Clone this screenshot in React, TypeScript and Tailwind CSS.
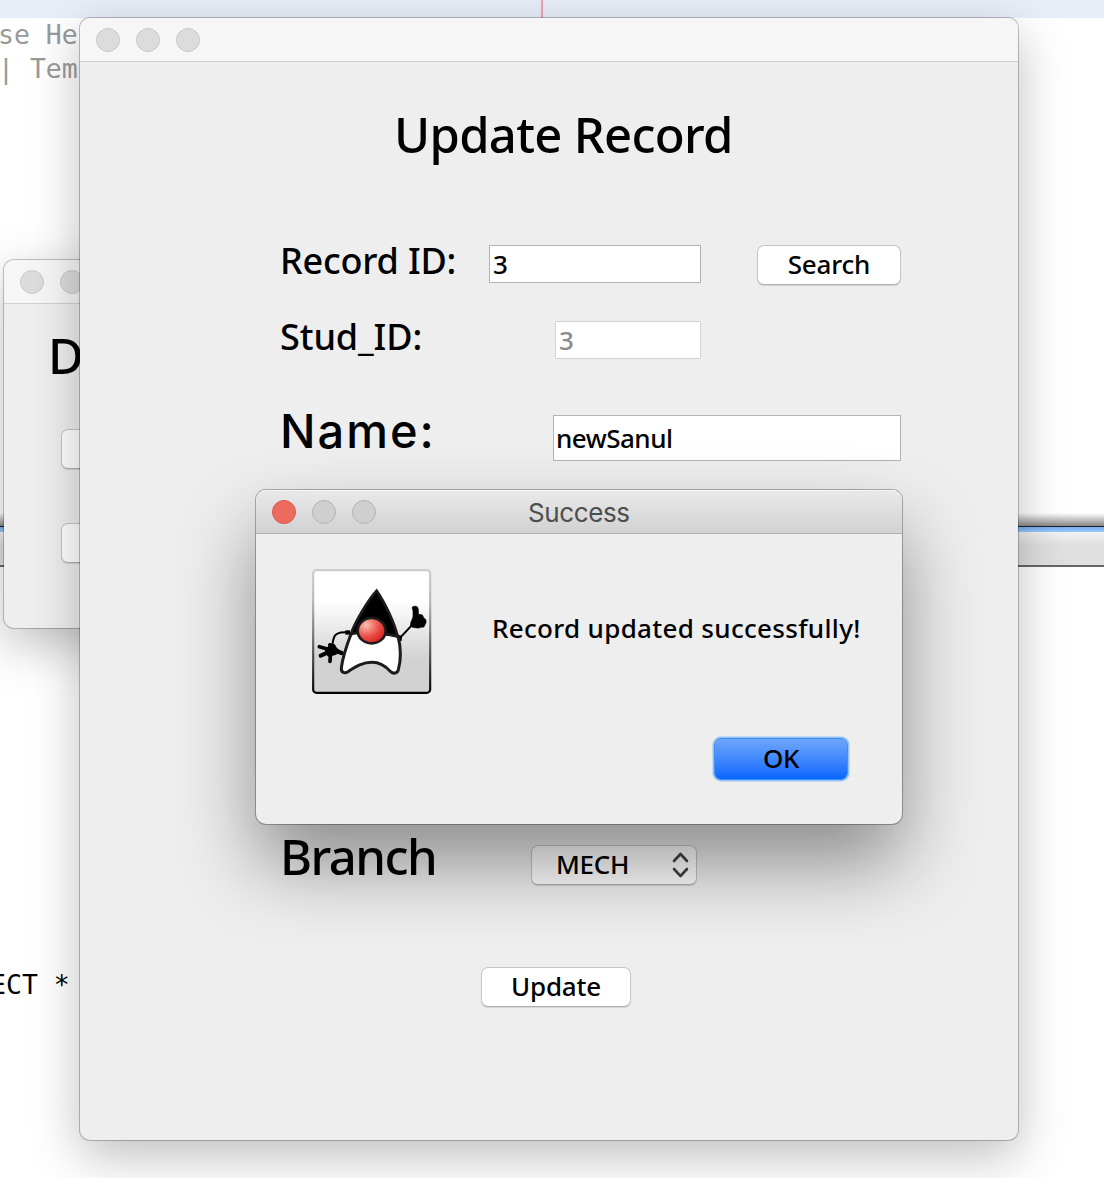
import React from "react";

const dim = "h-6 w-6 rounded-full border border-[#c9c9c9] bg-[#dcdcdc]";

function TrafficLights({ active = false }: { active?: boolean }) {
  const idle = active ? "h-6 w-6 rounded-full border border-[#b4b4b4] bg-[#cfcfcf]" : dim;
  return (
    <div className="flex gap-4">
      <span className={active ? "h-6 w-6 rounded-full border border-[#d9574c] bg-[#ed6a5e]" : idle} />
      <span className={idle} />
      <span className={idle} />
    </div>
  );
}

function Button({ children, className }: { children?: React.ReactNode; className: string }) {
  return (
    <button
      className={
        "block h-10 rounded-[7px] border border-[#c6c6c6] border-b-[#b0b0b0] bg-white pb-0.5 text-center text-[26px] leading-[34px] font-medium tracking-[-0.2px] shadow-[0_1px_1px_rgba(0,0,0,0.12)] " +
        className
      }
    >
      {children}
    </button>
  );
}

function Duke() {
  return (
    <svg width="120" height="125" viewBox="30 27 360 375">
      <defs>
        <linearGradient id="panel" x1="0" y1="0" x2="0" y2="1">
          <stop offset="0.25" stopColor="#fff" />
          <stop offset="0.72" stopColor="#d2d2d2" />
        </linearGradient>
        <linearGradient id="edge" x1="0" y1="0" x2="0" y2="1">
          <stop offset="0" stopColor="#cdcdcd" />
          <stop offset="0.25" stopColor="#b8b8b8" />
          <stop offset="0.9" stopColor="#1c1c1c" />
          <stop offset="1" stopColor="#000" />
        </linearGradient>
        <radialGradient id="nose" cx="0.3" cy="0.28" r="0.75">
          <stop offset="0" stopColor="#f9c0ae" />
          <stop offset="0.6" stopColor="#ea5148" />
          <stop offset="1" stopColor="#dc2320" />
        </radialGradient>
      </defs>
      <rect x="33.5" y="30.5" width="351" height="368" rx="10" fill="url(#panel)" stroke="url(#edge)" strokeWidth="6.5" />
      <path d="M140 217 C116 215 100 220 96 232 C92 244 92 250 90 260" fill="none" stroke="#000" strokeWidth="6" />
      <path d="M130 211 h14 v13 h-14 z" fill="#000" />
      <g stroke="#000" strokeLinecap="round" fill="none">
        <path d="M86 270 L52 260" strokeWidth="11" />
        <path d="M86 274 L56 287" strokeWidth="12" />
        <path d="M86 274 L84 304" strokeWidth="11" />
        <path d="M88 266 L83 254" strokeWidth="10" />
        <path d="M94 270 L119 279" strokeWidth="13" />
      </g>
      <path d="M84 250 L98 253 L105 264 L120 276 L98 286 L78 290 L68 274 Z" fill="#000" />
      <path d="M292 236 L329 196" stroke="#000" strokeWidth="6" />
      <path d="M286 224 L300 228 L299 242 L288 246 Z" fill="#000" />
      <path
        d="M330 143 C332 138 344 137 347 142 C351 150 348 158 350 164 C356 162 363 164 363 169 C363 174 371 175 372 181 C373 186 372 190 369 194 C368 201 362 203 357 201 C351 207 344 203 338 203 C328 202 324 199 326 190 C327 182 333 176 333 168 C333 158 334 150 330 143 Z"
        fill="#000"
        stroke="#000"
        strokeWidth="2"
      />
      <path
        d="M148 220 C138 246 122 292 118 324 C117 338 128 341 138 335 C160 321 180 307 210 307 C238 307 254 322 266 335 C274 342 285 341 289 329 C296 304 297 264 288 228 C270 224 245 220 210 220 C190 218 168 214 148 220 Z"
        fill="#fff"
        stroke="#1c1c1c"
        strokeWidth="9"
        strokeLinejoin="round"
      />
      <path
        d="M224 92 C200 118 158 186 146 224 C156 218 165 218 176 220 L246 222 C262 222 276 226 287 230 C278 190 248 126 224 92 Z"
        fill="#000"
        stroke="#1c1c1c"
        strokeWidth="8"
        strokeLinejoin="miter"
      />
      <ellipse cx="209" cy="212" rx="42" ry="38" fill="url(#nose)" stroke="#1c1c1c" strokeWidth="8" />
    </svg>
  );
}

function MenuWindow() {
  return (
    <section className="absolute top-[260px] left-1 h-[368px] w-[420px] overflow-hidden rounded-[10px] bg-[#eeeeee] shadow-[0_0_0_1px_rgba(0,0,0,0.22),0_16px_50px_rgba(0,0,0,0.26)]">
      <header className="flex h-11 items-center border-b border-[#d0d0d0] bg-[#f6f6f6] px-4">
        <TrafficLights />
      </header>
      <h2 className="mt-[21px] ml-11 text-[49px] leading-[60px] font-medium">Database</h2>
      <Button className="mt-[44px] ml-[57px] w-[150px]" />
      <Button className="mt-[54px] ml-[57px] w-[150px]" />
    </section>
  );
}

function UpdateWindow() {
  return (
    <section className="absolute top-[18px] left-20 h-[1122px] w-[938px] rounded-[10px] bg-[#eeeeee] shadow-[0_0_0_1px_rgba(0,0,0,0.24),0_16px_50px_rgba(0,0,0,0.26)]">
      <header className="flex h-11 items-center rounded-t-[10px] border-b border-[#d0d0d0] bg-[#f6f6f6] px-4">
        <TrafficLights />
      </header>
      <h1 className="mt-[42px] ml-[314px] text-[49px] leading-[60px] font-medium tracking-[-0.7px] whitespace-nowrap">Update Record</h1>
      <div className="mt-[81px] ml-[200px] flex h-10 items-start">
        <label className="-mt-1 w-[209px] text-[36px] leading-10 font-medium tracking-[-0.2px] whitespace-nowrap">Record ID:</label>
        <div className="h-[38px] w-[212px] border border-[#b3b3b3] bg-white pl-[3px] text-[26px] leading-[37px] font-medium">3</div>
        <Button className="ml-[56px] w-36">Search</Button>
      </div>
      <div className="mt-9 ml-[200px] flex h-[38px] items-start">
        <label className="-mt-1 w-[275px] text-[36px] leading-10 font-medium tracking-[-0.1px] whitespace-nowrap">Stud_ID:</label>
        <div className="h-[38px] w-[146px] border border-[#d2d2d2] bg-white pl-[3px] text-[26px] leading-[37px] font-medium text-[#8c8c8c]">3</div>
      </div>
      <div className="mt-14 ml-[200px] flex h-[46px] items-start">
        <label className="-mt-[7px] w-[273px] font-[Inter] text-[47px] leading-[46px] font-medium tracking-[2px]">Name:</label>
        <div className="h-[46px] w-[348px] border border-[#b3b3b3] bg-white pl-0.5 text-[26px] leading-[44px] font-medium tracking-[-0.5px]">newSanul</div>
      </div>
      <div className="mt-96 ml-[200px] flex h-10 items-start">
        <label className="-mt-[9px] w-[251px] text-[49px] leading-10 font-medium tracking-[-1.5px]">Branch</label>
        <div className="flex h-10 w-[166px] items-center justify-between rounded-[7px] border border-[#c6c6c6] border-b-[#b0b0b0] bg-white pr-[7px] pl-6 text-[26px] leading-[36px] font-medium tracking-[-0.3px] shadow-[0_1px_1px_rgba(0,0,0,0.12)]">
          <span className="-mt-0.5">MECH</span>
          <svg width="17" height="26" viewBox="0 0 17 26" fill="none" stroke="#444" strokeWidth="2.6" strokeLinecap="round" strokeLinejoin="round">
            <path d="M2 9 L8.5 2 L15 9 M2 17 L8.5 24 L15 17" />
          </svg>
        </div>
      </div>
      <Button className="mt-[82px] ml-[401px] w-[150px]">Update</Button>
    </section>
  );
}

function SuccessDialog() {
  return (
    <section className="absolute top-[490px] left-64 h-[334px] w-[646px] rounded-[10px] bg-[#eeeeee] shadow-[0_0_0_1px_rgba(0,0,0,0.28),0_40px_78px_rgba(0,0,0,0.41)]">
      <header className="flex h-11 items-center rounded-t-[10px] border-b border-[#b1b1b1] bg-linear-to-b from-[#e9e9e9] to-[#d2d2d2] px-4 shadow-[inset_0_1px_0_#f5f5f5]">
        <TrafficLights active />
        <span className="mt-[3px] ml-[152px] font-[Inter] text-[26px] leading-8 tracking-[-0.4px] text-[#4d4d4d]">Success</span>
      </header>
      <div className="mt-[35px] ml-14 flex h-[125px]">
        <Duke />
        <p className="mt-[41px] ml-[60px] text-[26px] leading-9 font-medium tracking-[0.32px] whitespace-nowrap">Record updated successfully!</p>
      </div>
      <button className="mt-[44px] ml-[458px] block h-[42px] w-[134px] rounded-[7px] border border-[#3f8df5] bg-linear-to-b from-[#6da5fb] to-[#0566ff] pb-0.5 text-center text-[26px] leading-[36px] font-medium tracking-[-0.5px] shadow-[0_0_0_1.5px_#93c3f3]">
        OK
      </button>
    </section>
  );
}

export default function App() {
  return (
    <main className="relative h-[1178px] w-[1104px] overflow-hidden bg-white font-['Noto_Sans',sans-serif] text-black">
      <div className="h-[18px] bg-[#e8eef8] pl-[541px]">
        <div className="h-full w-[2px] bg-[#f5a3a8]" />
      </div>
      <pre className="-ml-0.5 h-[495px] font-['DejaVu_Sans_Mono'] text-[26.5px] leading-[34px] text-[#999999]">{"se He\n| Tem"}</pre>
      <div className="h-[13px] bg-linear-to-b from-transparent to-[#888888]" />
      <div className="h-px bg-[#222222]" />
      <div className="h-[5px] bg-linear-to-b from-[#76adf3] to-[#9cc8fa]" />
      <div className="h-[33px] bg-linear-to-b from-[#f2f2f2] to-[#e0e0e0] to-40%" />
      <div className="h-[2px] bg-[#666666]" />
      <pre className="mt-[401px] -ml-[10px] font-['DejaVu_Sans_Mono'] text-[26.5px] leading-[34px]">ECT *</pre>
      <MenuWindow />
      <UpdateWindow />
      <SuccessDialog />
    </main>
  );
}
